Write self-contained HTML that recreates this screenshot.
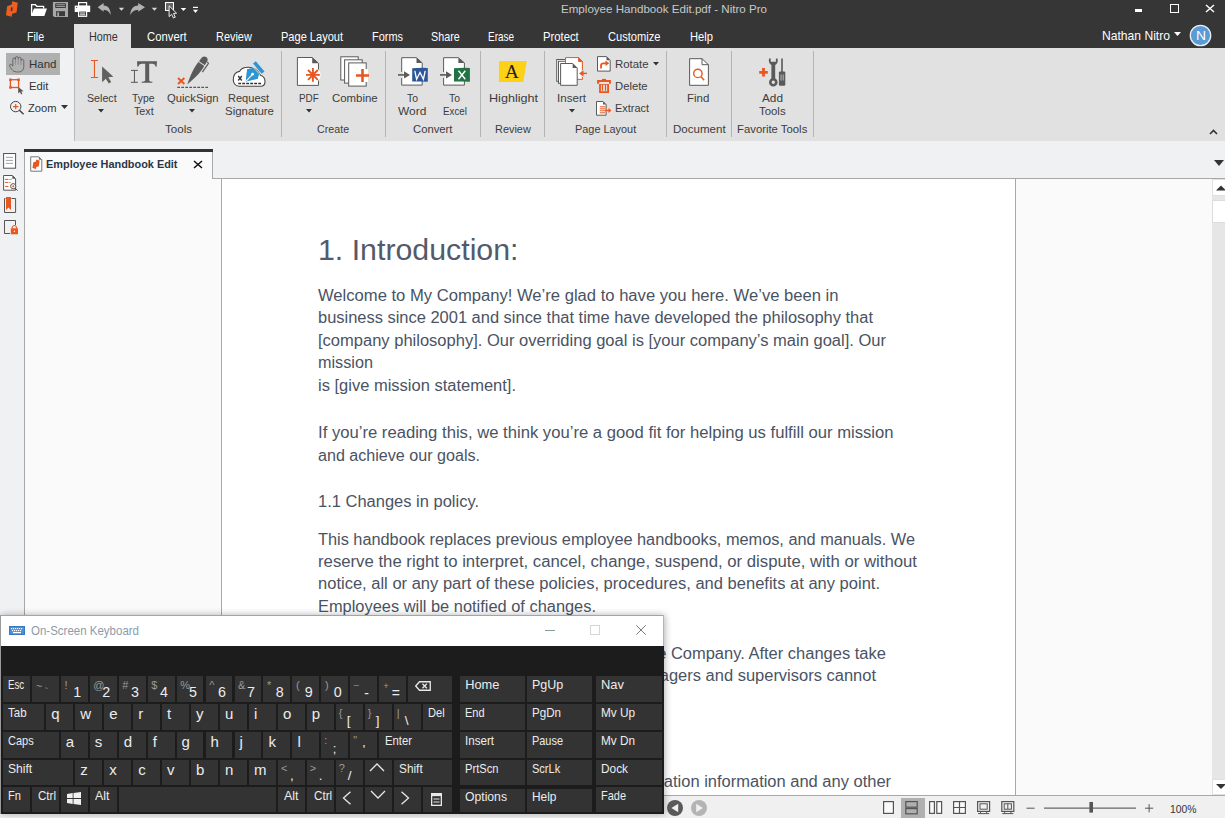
<!DOCTYPE html>
<html><head><meta charset="utf-8"><style>
html,body{margin:0;padding:0;width:1225px;height:818px;overflow:hidden;background:#f0f1f3;position:relative;}
.t{position:absolute;white-space:pre;font-family:"Liberation Sans", sans-serif;transform-origin:0 0;}
.r{position:absolute;display:block;}
</style></head><body>
<div class="r" style="left:0px;top:0px;width:1225px;height:48px;background:#363636;"></div>
<div class="r" style="left:0px;top:48px;width:74px;height:93px;background:#f0f1f3;"></div>
<div class="r" style="left:74px;top:48px;width:1151px;height:93px;background:#e1e1e1;"></div>
<div class="r" style="left:74px;top:48px;width:1px;height:93px;background:#b9b9b9;"></div>
<div class="r" style="left:74px;top:24px;width:57px;height:24px;background:#e1e1e1;"></div>
<div class="r" style="left:0px;top:141px;width:1225px;height:38px;background:#f0f1f3;"></div>
<div class="r" style="left:0px;top:179px;width:25px;height:639px;background:#f0f1f3;"></div>
<div class="r" style="left:24px;top:149px;width:189px;height:3px;background:#333333;"></div>
<div class="r" style="left:24px;top:152px;width:1px;height:27px;background:#a8a8a8;"></div>
<div class="r" style="left:212px;top:152px;width:1px;height:27px;background:#a8a8a8;"></div>
<div class="r" style="left:213px;top:178px;width:1012px;height:1px;background:#a8a8a8;"></div>
<div class="r" style="left:25px;top:152px;width:187px;height:27px;background:#fafafa;"></div>
<div class="r" style="left:24px;top:179px;width:1px;height:639px;background:#a8a8a8;"></div>
<div class="r" style="left:25px;top:179px;width:196px;height:639px;background:#fafafa;"></div>
<div class="r" style="left:221px;top:179px;width:1px;height:617px;background:#a8a8a8;"></div>
<div class="r" style="left:222px;top:179px;width:793px;height:617px;background:#ffffff;"></div>
<div class="r" style="left:1015px;top:179px;width:1px;height:617px;background:#a8a8a8;"></div>
<div class="r" style="left:1016px;top:179px;width:197px;height:617px;background:#fafafa;"></div>
<div class="r" style="left:1212px;top:179px;width:13px;height:616px;background:#e6e6e6;"></div>
<div class="r" style="left:1212px;top:179px;width:20px;height:17px;background:#ffffff;box-sizing:border-box;border:1px solid #e0e0e0;"></div>
<div class="r" style="left:1212px;top:200px;width:20px;height:23px;background:#ffffff;box-sizing:border-box;border:1px solid #dcdcdc;"></div>
<div class="r" style="left:1212px;top:779px;width:20px;height:16px;background:#ffffff;box-sizing:border-box;border:1px solid #e0e0e0;"></div>
<svg class="r" style="left:1212px;top:179px;overflow:hidden" width="13" height="17" viewBox="0 0 13 17"><path d="M4 11.5 L9 6.5 L14 11.5 Z" fill="#333"/></svg>
<svg class="r" style="left:1212px;top:779px;overflow:hidden" width="13" height="16" viewBox="0 0 13 16"><path d="M4 5 L9 10 L14 5 Z" fill="#333"/></svg>
<div class="r" style="left:0px;top:795px;width:1225px;height:1px;background:#a8a8a8;"></div>
<div class="r" style="left:0px;top:796px;width:1225px;height:22px;background:#f0f0f0;"></div>
<span id="t0" class="t fit" style="left:560.60px;top:3.63px;font-size:11.3px;line-height:11.3px;color:#c8c8c8;transform:scaleX(1.0252);">Employee Handbook Edit.pdf - Nitro Pro</span>
<div class="r" style="left:1135px;top:9px;width:7px;height:3px;background:#ffffff;"></div>
<div class="r" style="left:1170px;top:4px;width:9px;height:9px;background:transparent;box-sizing:border-box;border:1.6px solid #fff;"></div>
<svg class="r" style="left:1205px;top:4px;" width="10" height="9" viewBox="0 0 10 9"><path d="M1 1 L9 8 M9 1 L1 8" stroke="#fff" stroke-width="1.4"/></svg>
<span id="t1" class="t fit" style="left:26.50px;top:31.10px;font-size:12.4px;line-height:12.4px;color:#ffffff;transform:scaleX(0.8563);">File</span>
<span id="t2" class="t fit" style="left:147.00px;top:31.10px;font-size:12.4px;line-height:12.4px;color:#ffffff;transform:scaleX(0.9126);">Convert</span>
<span id="t3" class="t fit" style="left:216.00px;top:31.10px;font-size:12.4px;line-height:12.4px;color:#ffffff;transform:scaleX(0.8809);">Review</span>
<span id="t4" class="t fit" style="left:281.00px;top:31.10px;font-size:12.4px;line-height:12.4px;color:#ffffff;transform:scaleX(0.8909);">Page Layout</span>
<span id="t5" class="t fit" style="left:372.00px;top:31.10px;font-size:12.4px;line-height:12.4px;color:#ffffff;transform:scaleX(0.8830);">Forms</span>
<span id="t6" class="t fit" style="left:431.00px;top:31.10px;font-size:12.4px;line-height:12.4px;color:#ffffff;transform:scaleX(0.8676);">Share</span>
<span id="t7" class="t fit" style="left:488.00px;top:31.10px;font-size:12.4px;line-height:12.4px;color:#ffffff;transform:scaleX(0.8031);">Erase</span>
<span id="t8" class="t fit" style="left:543.00px;top:31.10px;font-size:12.4px;line-height:12.4px;color:#ffffff;transform:scaleX(0.9092);">Protect</span>
<span id="t9" class="t fit" style="left:608.00px;top:31.10px;font-size:12.4px;line-height:12.4px;color:#ffffff;transform:scaleX(0.8970);">Customize</span>
<span id="t10" class="t fit" style="left:690.00px;top:31.10px;font-size:12.4px;line-height:12.4px;color:#ffffff;transform:scaleX(0.9025);">Help</span>
<span id="t11" class="t fit" style="left:88.70px;top:31.10px;font-size:12.4px;line-height:12.4px;color:#333333;transform:scaleX(0.8741);">Home</span>
<span id="t12" class="t fit" style="left:1101.60px;top:29.60px;font-size:12.4px;line-height:12.4px;color:#ffffff;transform:scaleX(0.9775);">Nathan Nitro</span>
<svg class="r" style="left:1174px;top:32px;" width="7" height="5" viewBox="0 0 7 5"><path d="M0 0 L7 0 L3.5 4 Z" fill="#fff"/></svg>
<svg class="r" style="left:1189px;top:24px;" width="23" height="23" viewBox="0 0 23 23"><circle cx="11.5" cy="11.5" r="10.2" fill="#5b9bd5" stroke="#e8eef5" stroke-width="1.3"/></svg>
<span id="t13" class="t fit" style="left:1195.50px;top:30.00px;font-size:12.4px;line-height:12.4px;color:#ffffff;transform:scaleX(1.1169);">N</span>
<div class="r" style="left:6px;top:53px;width:54px;height:22px;background:#b0b0b0;"></div>
<span id="t14" class="t fit" style="left:28.50px;top:58.28px;font-size:11.6px;line-height:11.6px;color:#333;transform:scaleX(0.9921);">Hand</span>
<span id="t15" class="t fit" style="left:28.50px;top:79.88px;font-size:11.6px;line-height:11.6px;color:#333;transform:scaleX(0.9758);">Edit</span>
<span id="t16" class="t fit" style="left:28.00px;top:102.18px;font-size:11.6px;line-height:11.6px;color:#333;transform:scaleX(0.9615);">Zoom</span>
<svg class="r" style="left:61px;top:105px;" width="7" height="5" viewBox="0 0 7 5"><path d="M0 0 L7 0 L3.5 4 Z" fill="#333"/></svg>
<div class="r" style="left:281px;top:51px;width:1px;height:86px;background:#b4b4b4;"></div>
<div class="r" style="left:385px;top:51px;width:1px;height:86px;background:#b4b4b4;"></div>
<div class="r" style="left:480px;top:51px;width:1px;height:86px;background:#b4b4b4;"></div>
<div class="r" style="left:544px;top:51px;width:1px;height:86px;background:#b4b4b4;"></div>
<div class="r" style="left:666px;top:51px;width:1px;height:86px;background:#b4b4b4;"></div>
<div class="r" style="left:731px;top:51px;width:1px;height:86px;background:#b4b4b4;"></div>
<div class="r" style="left:813px;top:51px;width:1px;height:86px;background:#b4b4b4;"></div>
<div class="r" style="left:74px;top:141px;width:1151px;height:0px;background:#000;"></div>
<span id="t17" class="t fit" style="left:87.40px;top:93.02px;font-size:11.2px;line-height:11.2px;color:#3c3c3c;transform:scaleX(0.9520);">Select</span>
<span id="t18" class="t fit" style="left:132.00px;top:93.02px;font-size:11.2px;line-height:11.2px;color:#3c3c3c;transform:scaleX(0.9314);">Type</span>
<span id="t19" class="t fit" style="left:133.95px;top:106.02px;font-size:11.2px;line-height:11.2px;color:#3c3c3c;transform:scaleX(0.9595);">Text</span>
<span id="t20" class="t fit" style="left:167.45px;top:93.02px;font-size:11.2px;line-height:11.2px;color:#3c3c3c;transform:scaleX(1.0098);">QuickSign</span>
<span id="t21" class="t fit" style="left:228.45px;top:93.02px;font-size:11.2px;line-height:11.2px;color:#3c3c3c;transform:scaleX(0.9863);">Request</span>
<span id="t22" class="t fit" style="left:225.00px;top:106.02px;font-size:11.2px;line-height:11.2px;color:#3c3c3c;transform:scaleX(1.0228);">Signature</span>
<span id="t23" class="t fit" style="left:164.95px;top:124.02px;font-size:11.2px;line-height:11.2px;color:#3c3c3c;transform:scaleX(1.0373);">Tools</span>
<span id="t24" class="t fit" style="left:299.20px;top:93.02px;font-size:11.2px;line-height:11.2px;color:#3c3c3c;transform:scaleX(0.8849);">PDF</span>
<span id="t25" class="t fit" style="left:331.95px;top:93.02px;font-size:11.2px;line-height:11.2px;color:#3c3c3c;transform:scaleX(1.0205);">Combine</span>
<span id="t26" class="t fit" style="left:317.35px;top:124.02px;font-size:11.2px;line-height:11.2px;color:#3c3c3c;transform:scaleX(0.9555);">Create</span>
<span id="t27" class="t fit" style="left:407.00px;top:93.02px;font-size:11.2px;line-height:11.2px;color:#3c3c3c;transform:scaleX(0.9300);">To</span>
<span id="t28" class="t fit" style="left:398.25px;top:106.02px;font-size:11.2px;line-height:11.2px;color:#3c3c3c;transform:scaleX(1.0667);">Word</span>
<span id="t29" class="t fit" style="left:449.00px;top:93.02px;font-size:11.2px;line-height:11.2px;color:#3c3c3c;transform:scaleX(0.9300);">To</span>
<span id="t30" class="t fit" style="left:442.60px;top:106.02px;font-size:11.2px;line-height:11.2px;color:#3c3c3c;transform:scaleX(0.8772);">Excel</span>
<span id="t31" class="t fit" style="left:413.35px;top:124.02px;font-size:11.2px;line-height:11.2px;color:#3c3c3c;transform:scaleX(1.0080);">Convert</span>
<span id="t32" class="t fit" style="left:489.00px;top:93.02px;font-size:11.2px;line-height:11.2px;color:#3c3c3c;transform:scaleX(1.1252);">Highlight</span>
<span id="t33" class="t fit" style="left:495.00px;top:124.02px;font-size:11.2px;line-height:11.2px;color:#3c3c3c;transform:scaleX(0.9758);">Review</span>
<span id="t34" class="t fit" style="left:557.00px;top:93.02px;font-size:11.2px;line-height:11.2px;color:#3c3c3c;transform:scaleX(1.0363);">Insert</span>
<span id="t35" class="t fit" style="left:575.40px;top:124.02px;font-size:11.2px;line-height:11.2px;color:#3c3c3c;transform:scaleX(0.9741);">Page Layout</span>
<span id="t36" class="t fit" style="left:615.00px;top:59.22px;font-size:11.2px;line-height:11.2px;color:#3c3c3c;transform:scaleX(1.0191);">Rotate</span>
<span id="t37" class="t fit" style="left:615.20px;top:81.02px;font-size:11.2px;line-height:11.2px;color:#3c3c3c;transform:scaleX(1.0079);">Delete</span>
<span id="t38" class="t fit" style="left:615.00px;top:103.02px;font-size:11.2px;line-height:11.2px;color:#3c3c3c;transform:scaleX(0.9762);">Extract</span>
<span id="t39" class="t fit" style="left:687.35px;top:93.02px;font-size:11.2px;line-height:11.2px;color:#3c3c3c;transform:scaleX(1.0246);">Find</span>
<span id="t40" class="t fit" style="left:673.40px;top:124.02px;font-size:11.2px;line-height:11.2px;color:#3c3c3c;transform:scaleX(1.0314);">Document</span>
<span id="t41" class="t fit" style="left:762.00px;top:93.02px;font-size:11.2px;line-height:11.2px;color:#3c3c3c;transform:scaleX(1.0549);">Add</span>
<span id="t42" class="t fit" style="left:759.00px;top:106.02px;font-size:11.2px;line-height:11.2px;color:#3c3c3c;transform:scaleX(1.0182);">Tools</span>
<span id="t43" class="t fit" style="left:737.15px;top:124.02px;font-size:11.2px;line-height:11.2px;color:#3c3c3c;transform:scaleX(1.0124);">Favorite Tools</span>
<svg class="r" style="left:98.4px;top:108.6px;" width="6" height="4" viewBox="0 0 6 4"><path d="M0 0 L6 0 L3 3.5 Z" fill="#333"/></svg>
<svg class="r" style="left:189.3px;top:108.6px;" width="6" height="4" viewBox="0 0 6 4"><path d="M0 0 L6 0 L3 3.5 Z" fill="#333"/></svg>
<svg class="r" style="left:305.5px;top:108.6px;" width="6" height="4" viewBox="0 0 6 4"><path d="M0 0 L6 0 L3 3.5 Z" fill="#333"/></svg>
<svg class="r" style="left:568.5px;top:108.6px;" width="6" height="4" viewBox="0 0 6 4"><path d="M0 0 L6 0 L3 3.5 Z" fill="#333"/></svg>
<svg class="r" style="left:653px;top:62px;" width="6" height="4" viewBox="0 0 6 4"><path d="M0 0 L6 0 L3 3.5 Z" fill="#333"/></svg>
<svg class="r" style="left:1209px;top:129px;" width="9" height="6" viewBox="0 0 9 6"><path d="M1 5 L4.5 1.5 L8 5" stroke="#333" stroke-width="1.6" fill="none"/></svg>
<svg class="r" style="left:1213.5px;top:160.3px;" width="10" height="6" viewBox="0 0 10 6"><path d="M0 0 L10 0 L5 6 Z" fill="#333"/></svg>
<span id="t44" class="t fit" style="left:46.40px;top:158.65px;font-size:11.4px;line-height:11.4px;color:#2b3645;font-weight:700;transform:scaleX(0.9575);">Employee Handbook Edit</span>
<svg class="r" style="left:193px;top:160px;" width="10" height="9" viewBox="0 0 10 9"><path d="M1 1 L9 8 M9 1 L1 8" stroke="#111" stroke-width="1.5"/></svg>
<span id="t45" class="t fit" style="left:318.00px;top:235.55px;font-size:29px;line-height:29px;color:#535a69;transform:scaleX(1.0451);">1. Introduction:</span>
<span id="t46" class="t fit" style="left:317.90px;top:287.56px;font-size:16px;line-height:16px;color:#4a5363;transform:scaleX(1.0377);">Welcome to My Company! We’re glad to have you here. We’ve been in</span>
<span id="t47" class="t fit" style="left:317.90px;top:310.36px;font-size:16px;line-height:16px;color:#4a5363;transform:scaleX(1.0279);">business since 2001 and since that time have developed the philosophy that</span>
<span id="t48" class="t fit" style="left:317.90px;top:332.96px;font-size:16px;line-height:16px;color:#4a5363;transform:scaleX(1.0323);">[company philosophy]. Our overriding goal is [your company’s main goal]. Our</span>
<span id="t49" class="t fit" style="left:317.90px;top:355.46px;font-size:16px;line-height:16px;color:#4a5363;transform:scaleX(1.0141);">mission</span>
<span id="t50" class="t fit" style="left:317.90px;top:378.36px;font-size:16px;line-height:16px;color:#4a5363;transform:scaleX(1.0308);">is [give mission statement].</span>
<span id="t51" class="t fit" style="left:317.90px;top:425.26px;font-size:16px;line-height:16px;color:#4a5363;transform:scaleX(1.0405);">If you’re reading this, we think you’re a good fit for helping us fulfill our mission</span>
<span id="t52" class="t fit" style="left:317.90px;top:447.56px;font-size:16px;line-height:16px;color:#4a5363;transform:scaleX(1.0062);">and achieve our goals.</span>
<span id="t53" class="t fit" style="left:317.90px;top:493.76px;font-size:16px;line-height:16px;color:#4a5363;transform:scaleX(1.0304);">1.1 Changes in policy.</span>
<span id="t54" class="t fit" style="left:317.90px;top:531.66px;font-size:16px;line-height:16px;color:#4a5363;transform:scaleX(1.0191);">This handbook replaces previous employee handbooks, memos, and manuals. We</span>
<span id="t55" class="t fit" style="left:317.90px;top:553.86px;font-size:16px;line-height:16px;color:#4a5363;transform:scaleX(1.0458);">reserve the right to interpret, cancel, change, suspend, or dispute, with or without</span>
<span id="t56" class="t fit" style="left:317.90px;top:576.46px;font-size:16px;line-height:16px;color:#4a5363;transform:scaleX(1.0325);">notice, all or any part of these policies, procedures, and benefits at any point.</span>
<span id="t57" class="t fit" style="left:317.90px;top:599.16px;font-size:16px;line-height:16px;color:#4a5363;transform:scaleX(1.0248);">Employees will be notified of changes.</span>
<span id="t58" class="t fit" style="left:280.15px;top:645.76px;font-size:16px;line-height:16px;color:#4a5363;transform:scaleX(1.0300);">Changes will be effective on dates determined by the Company. After changes take</span>
<span id="t59" class="t fit" style="left:279.03px;top:668.26px;font-size:16px;line-height:16px;color:#4a5363;transform:scaleX(1.0300);">effect, no oral statements or representations by managers and supervisors cannot</span>
<span id="t60" class="t fit" style="left:214.93px;top:774.36px;font-size:16px;line-height:16px;color:#4a5363;transform:scaleX(1.0300);">Please consult your manager for more details about compensation information and any other</span>
<div class="r" style="left:0px;top:615px;width:664px;height:199px;background:#1c1c1c;box-shadow:1px 0px 7px rgba(0,0,0,0.3);"></div>
<div class="r" style="left:0px;top:615px;width:664px;height:31px;background:#ffffff;box-sizing:border-box;border-top:1px solid #a4a4a4;"></div>
<div class="r" style="left:0px;top:615px;width:1px;height:199px;background:#9a9a9a;"></div>
<span id="t61" class="t fit" style="left:30.60px;top:624.90px;font-size:12.4px;line-height:12.4px;color:#8d9ba8;transform:scaleX(0.9278);">On-Screen Keyboard</span>
<svg class="r" style="left:9px;top:626px;" width="16" height="9" viewBox="0 0 16 9"><rect x="0.5" y="0.5" width="15" height="8" fill="#4a8fd8" stroke="#3b78c0" stroke-width="1"/><rect x="2" y="2" width="1.2" height="1.2" fill="#fff"/><rect x="4" y="2" width="1.2" height="1.2" fill="#fff"/><rect x="6" y="2" width="1.2" height="1.2" fill="#fff"/><rect x="8" y="2" width="1.2" height="1.2" fill="#fff"/><rect x="10" y="2" width="1.2" height="1.2" fill="#fff"/><rect x="12" y="2" width="1.2" height="1.2" fill="#fff"/><rect x="3" y="4" width="1.2" height="1.2" fill="#fff"/><rect x="5" y="4" width="1.2" height="1.2" fill="#fff"/><rect x="7" y="4" width="1.2" height="1.2" fill="#fff"/><rect x="9" y="4" width="1.2" height="1.2" fill="#fff"/><rect x="11" y="4" width="1.2" height="1.2" fill="#fff"/><rect x="4" y="6" width="8" height="1.2" fill="#fff"/></svg>
<div class="r" style="left:545px;top:630px;width:10px;height:1px;background:#86a090;"></div>
<div class="r" style="left:590px;top:625px;width:10px;height:10px;background:transparent;box-sizing:border-box;border:1px solid #d6d6d6;"></div>
<svg class="r" style="left:636px;top:625px;" width="10" height="10" viewBox="0 0 10 10"><path d="M0.3 0.3 L9.7 9.7 M9.7 0.3 L0.3 9.7" stroke="#7a7a7a" stroke-width="1"/></svg>
<div class="r" style="left:663px;top:615px;width:1px;height:31px;background:#b4b4b4;"></div>
<div class="r" style="left:2.9px;top:676px;width:26.9px;height:26px;background:#333333;"></div>
<span id="t62" class="t fit" style="left:8.40px;top:678.66px;font-size:12.8px;line-height:12.8px;color:#ececec;transform:scaleX(0.7590);">Esc</span>
<div class="r" style="left:31.8px;top:676px;width:26.9px;height:26px;background:#333333;"></div>
<span id="t63" class="t fit" style="left:35.85px;top:681.19px;font-size:11px;line-height:11px;color:#9a9a9a;">~</span>
<span id="t64" class="t fit" style="left:44.85px;top:686.69px;font-size:11px;line-height:11px;color:#9a9a9a;">`</span>
<div class="r" style="left:60.8px;top:676px;width:26.9px;height:26px;background:#333333;"></div>
<span id="t65" class="t fit" style="left:64.40px;top:679.69px;font-size:11px;line-height:11px;color:#9a9a9a;">!</span>
<span id="t66" class="t fit" style="left:73.20px;top:685.40px;font-size:14.3px;line-height:14.3px;color:#ececec;">1</span>
<div class="r" style="left:89.8px;top:676px;width:26.9px;height:26px;background:#333333;"></div>
<span id="t67" class="t fit" style="left:93.35px;top:679.69px;font-size:11px;line-height:11px;color:#9a9a9a;">@</span>
<span id="t68" class="t fit" style="left:102.15px;top:685.40px;font-size:14.3px;line-height:14.3px;color:#ececec;">2</span>
<div class="r" style="left:118.7px;top:676px;width:26.9px;height:26px;background:#333333;"></div>
<span id="t69" class="t fit" style="left:122.30px;top:679.69px;font-size:11px;line-height:11px;color:#9a9a9a;">#</span>
<span id="t70" class="t fit" style="left:131.10px;top:685.40px;font-size:14.3px;line-height:14.3px;color:#ececec;">3</span>
<div class="r" style="left:147.7px;top:676px;width:26.9px;height:26px;background:#333333;"></div>
<span id="t71" class="t fit" style="left:151.25px;top:679.69px;font-size:11px;line-height:11px;color:#9a9a9a;">$</span>
<span id="t72" class="t fit" style="left:160.05px;top:685.40px;font-size:14.3px;line-height:14.3px;color:#ececec;">4</span>
<div class="r" style="left:176.6px;top:676px;width:26.9px;height:26px;background:#333333;"></div>
<span id="t73" class="t fit" style="left:180.20px;top:679.69px;font-size:11px;line-height:11px;color:#9a9a9a;">%</span>
<span id="t74" class="t fit" style="left:189.00px;top:685.40px;font-size:14.3px;line-height:14.3px;color:#ececec;">5</span>
<div class="r" style="left:205.6px;top:676px;width:26.9px;height:26px;background:#333333;"></div>
<span id="t75" class="t fit" style="left:209.15px;top:679.69px;font-size:11px;line-height:11px;color:#9a9a9a;">^</span>
<span id="t76" class="t fit" style="left:217.95px;top:685.40px;font-size:14.3px;line-height:14.3px;color:#ececec;">6</span>
<div class="r" style="left:234.5px;top:676px;width:26.9px;height:26px;background:#333333;"></div>
<span id="t77" class="t fit" style="left:238.10px;top:679.69px;font-size:11px;line-height:11px;color:#9a9a9a;">&amp;</span>
<span id="t78" class="t fit" style="left:246.90px;top:685.40px;font-size:14.3px;line-height:14.3px;color:#ececec;">7</span>
<div class="r" style="left:263.4px;top:676px;width:26.9px;height:26px;background:#333333;"></div>
<span id="t79" class="t fit" style="left:267.05px;top:679.69px;font-size:11px;line-height:11px;color:#9a9a9a;">*</span>
<span id="t80" class="t fit" style="left:275.85px;top:685.40px;font-size:14.3px;line-height:14.3px;color:#ececec;">8</span>
<div class="r" style="left:292.4px;top:676px;width:26.9px;height:26px;background:#333333;"></div>
<span id="t81" class="t fit" style="left:296.00px;top:679.69px;font-size:11px;line-height:11px;color:#9a9a9a;">(</span>
<span id="t82" class="t fit" style="left:304.80px;top:685.40px;font-size:14.3px;line-height:14.3px;color:#ececec;">9</span>
<div class="r" style="left:321.3px;top:676px;width:26.9px;height:26px;background:#333333;"></div>
<span id="t83" class="t fit" style="left:324.95px;top:679.69px;font-size:11px;line-height:11px;color:#9a9a9a;">)</span>
<span id="t84" class="t fit" style="left:333.75px;top:685.40px;font-size:14.3px;line-height:14.3px;color:#ececec;">0</span>
<div class="r" style="left:350.3px;top:676px;width:26.9px;height:26px;background:#333333;"></div>
<span id="t85" class="t fit" style="left:353.80px;top:681.38px;font-size:9px;line-height:9px;color:#9a9a9a;">–</span>
<span id="t86" class="t fit" style="left:364.30px;top:685.65px;font-size:14px;line-height:14px;color:#ececec;">-</span>
<div class="r" style="left:379.2px;top:676px;width:26.9px;height:26px;background:#333333;"></div>
<span id="t87" class="t fit" style="left:383.25px;top:680.96px;font-size:9.5px;line-height:9.5px;color:#9a9a9a;">+</span>
<span id="t88" class="t fit" style="left:391.75px;top:685.65px;font-size:14px;line-height:14px;color:#ececec;">=</span>
<div class="r" style="left:408.2px;top:676px;width:43.4px;height:26px;background:#333333;"></div>
<svg class="r" style="left:415px;top:681px;" width="16" height="10" viewBox="0 0 16 10"><path d="M4.5 0.75 L15.25 0.75 L15.25 9.25 L4.5 9.25 L0.7 5 Z" fill="none" stroke="#e8e8e8" stroke-width="1.3"/><path d="M7.5 2.8 L11.8 7.2 M11.8 2.8 L7.5 7.2" stroke="#e8e8e8" stroke-width="1.3"/></svg>
<div class="r" style="left:2.9px;top:704px;width:41.4px;height:26px;background:#333333;"></div>
<span id="t89" class="t fit" style="left:8.20px;top:706.66px;font-size:12.8px;line-height:12.8px;color:#ececec;transform:scaleX(0.9011);">Tab</span>
<div class="r" style="left:46.3px;top:704px;width:26.9px;height:26px;background:#333333;"></div>
<span id="t90" class="t fit" style="left:51.32px;top:706.00px;font-size:15px;line-height:15px;color:#ececec;">q</span>
<div class="r" style="left:75.3px;top:704px;width:26.9px;height:26px;background:#333333;"></div>
<span id="t91" class="t fit" style="left:80.28px;top:706.00px;font-size:15px;line-height:15px;color:#ececec;">w</span>
<div class="r" style="left:104.2px;top:704px;width:26.9px;height:26px;background:#333333;"></div>
<span id="t92" class="t fit" style="left:109.23px;top:706.00px;font-size:15px;line-height:15px;color:#ececec;">e</span>
<div class="r" style="left:133.2px;top:704px;width:26.9px;height:26px;background:#333333;"></div>
<span id="t93" class="t fit" style="left:138.18px;top:706.00px;font-size:15px;line-height:15px;color:#ececec;">r</span>
<div class="r" style="left:162.1px;top:704px;width:26.9px;height:26px;background:#333333;"></div>
<span id="t94" class="t fit" style="left:167.12px;top:706.00px;font-size:15px;line-height:15px;color:#ececec;">t</span>
<div class="r" style="left:191.1px;top:704px;width:26.9px;height:26px;background:#333333;"></div>
<span id="t95" class="t fit" style="left:196.07px;top:706.00px;font-size:15px;line-height:15px;color:#ececec;">y</span>
<div class="r" style="left:220.0px;top:704px;width:26.9px;height:26px;background:#333333;"></div>
<span id="t96" class="t fit" style="left:225.03px;top:706.00px;font-size:15px;line-height:15px;color:#ececec;">u</span>
<div class="r" style="left:249.0px;top:704px;width:26.9px;height:26px;background:#333333;"></div>
<span id="t97" class="t fit" style="left:253.97px;top:706.00px;font-size:15px;line-height:15px;color:#ececec;">i</span>
<div class="r" style="left:277.9px;top:704px;width:26.9px;height:26px;background:#333333;"></div>
<span id="t98" class="t fit" style="left:282.92px;top:706.00px;font-size:15px;line-height:15px;color:#ececec;">o</span>
<div class="r" style="left:306.9px;top:704px;width:26.9px;height:26px;background:#333333;"></div>
<span id="t99" class="t fit" style="left:311.87px;top:706.00px;font-size:15px;line-height:15px;color:#ececec;">p</span>
<div class="r" style="left:335.8px;top:704px;width:26.9px;height:26px;background:#333333;"></div>
<span id="t100" class="t fit" style="left:338.82px;top:707.69px;font-size:11px;line-height:11px;color:#9a9a9a;">{</span>
<span id="t101" class="t fit" style="left:346.82px;top:714.07px;font-size:13.5px;line-height:13.5px;color:#ececec;">[</span>
<div class="r" style="left:364.8px;top:704px;width:26.9px;height:26px;background:#333333;"></div>
<span id="t102" class="t fit" style="left:367.77px;top:707.69px;font-size:11px;line-height:11px;color:#9a9a9a;">}</span>
<span id="t103" class="t fit" style="left:375.77px;top:714.07px;font-size:13.5px;line-height:13.5px;color:#ececec;">]</span>
<div class="r" style="left:393.7px;top:704px;width:26.9px;height:26px;background:#333333;"></div>
<span id="t104" class="t fit" style="left:396.72px;top:707.69px;font-size:11px;line-height:11px;color:#9a9a9a;">|</span>
<span id="t105" class="t fit" style="left:404.72px;top:714.07px;font-size:13.5px;line-height:13.5px;color:#ececec;">\</span>
<div class="r" style="left:422.7px;top:704px;width:28.9px;height:26px;background:#333333;"></div>
<span id="t106" class="t fit" style="left:428.30px;top:706.66px;font-size:12.8px;line-height:12.8px;color:#ececec;transform:scaleX(0.8697);">Del</span>
<div class="r" style="left:2.9px;top:732px;width:55.9px;height:26px;background:#333333;"></div>
<span id="t107" class="t fit" style="left:8.30px;top:734.66px;font-size:12.8px;line-height:12.8px;color:#ececec;transform:scaleX(0.8603);">Caps</span>
<div class="r" style="left:60.8px;top:732px;width:26.9px;height:26px;background:#333333;"></div>
<span id="t108" class="t fit" style="left:65.80px;top:734.00px;font-size:15px;line-height:15px;color:#ececec;">a</span>
<div class="r" style="left:89.8px;top:732px;width:26.9px;height:26px;background:#333333;"></div>
<span id="t109" class="t fit" style="left:94.75px;top:734.00px;font-size:15px;line-height:15px;color:#ececec;">s</span>
<div class="r" style="left:118.7px;top:732px;width:26.9px;height:26px;background:#333333;"></div>
<span id="t110" class="t fit" style="left:123.70px;top:734.00px;font-size:15px;line-height:15px;color:#ececec;">d</span>
<div class="r" style="left:147.7px;top:732px;width:26.9px;height:26px;background:#333333;"></div>
<span id="t111" class="t fit" style="left:152.65px;top:734.00px;font-size:15px;line-height:15px;color:#ececec;">f</span>
<div class="r" style="left:176.6px;top:732px;width:26.9px;height:26px;background:#333333;"></div>
<span id="t112" class="t fit" style="left:181.60px;top:734.00px;font-size:15px;line-height:15px;color:#ececec;">g</span>
<div class="r" style="left:205.6px;top:732px;width:26.9px;height:26px;background:#333333;"></div>
<span id="t113" class="t fit" style="left:210.55px;top:734.00px;font-size:15px;line-height:15px;color:#ececec;">h</span>
<div class="r" style="left:234.5px;top:732px;width:26.9px;height:26px;background:#333333;"></div>
<span id="t114" class="t fit" style="left:239.50px;top:734.00px;font-size:15px;line-height:15px;color:#ececec;">j</span>
<div class="r" style="left:263.4px;top:732px;width:26.9px;height:26px;background:#333333;"></div>
<span id="t115" class="t fit" style="left:268.45px;top:734.00px;font-size:15px;line-height:15px;color:#ececec;">k</span>
<div class="r" style="left:292.4px;top:732px;width:26.9px;height:26px;background:#333333;"></div>
<span id="t116" class="t fit" style="left:297.40px;top:734.00px;font-size:15px;line-height:15px;color:#ececec;">l</span>
<div class="r" style="left:321.3px;top:732px;width:26.9px;height:26px;background:#333333;"></div>
<span id="t117" class="t fit" style="left:324.35px;top:735.19px;font-size:11px;line-height:11px;color:#9a9a9a;">:</span>
<span id="t118" class="t fit" style="left:332.85px;top:741.50px;font-size:13px;line-height:13px;color:#ececec;">;</span>
<div class="r" style="left:350.3px;top:732px;width:26.9px;height:26px;background:#333333;"></div>
<span id="t119" class="t fit" style="left:353.30px;top:735.19px;font-size:11px;line-height:11px;color:#9a9a9a;">"</span>
<span id="t120" class="t fit" style="left:362.80px;top:742.50px;font-size:13px;line-height:13px;color:#ececec;">'</span>
<div class="r" style="left:379.2px;top:732px;width:72.4px;height:26px;background:#333333;"></div>
<span id="t121" class="t fit" style="left:385.00px;top:734.66px;font-size:12.8px;line-height:12.8px;color:#ececec;transform:scaleX(0.8825);">Enter</span>
<div class="r" style="left:2.9px;top:760px;width:70.4px;height:25px;background:#333333;"></div>
<span id="t122" class="t fit" style="left:8.20px;top:762.66px;font-size:12.8px;line-height:12.8px;color:#ececec;transform:scaleX(0.9450);">Shift</span>
<div class="r" style="left:75.3px;top:760px;width:26.9px;height:25px;background:#333333;"></div>
<span id="t123" class="t fit" style="left:80.28px;top:762.00px;font-size:15px;line-height:15px;color:#ececec;">z</span>
<div class="r" style="left:104.2px;top:760px;width:26.9px;height:25px;background:#333333;"></div>
<span id="t124" class="t fit" style="left:109.23px;top:762.00px;font-size:15px;line-height:15px;color:#ececec;">x</span>
<div class="r" style="left:133.2px;top:760px;width:26.9px;height:25px;background:#333333;"></div>
<span id="t125" class="t fit" style="left:138.18px;top:762.00px;font-size:15px;line-height:15px;color:#ececec;">c</span>
<div class="r" style="left:162.1px;top:760px;width:26.9px;height:25px;background:#333333;"></div>
<span id="t126" class="t fit" style="left:167.12px;top:762.00px;font-size:15px;line-height:15px;color:#ececec;">v</span>
<div class="r" style="left:191.1px;top:760px;width:26.9px;height:25px;background:#333333;"></div>
<span id="t127" class="t fit" style="left:196.07px;top:762.00px;font-size:15px;line-height:15px;color:#ececec;">b</span>
<div class="r" style="left:220.0px;top:760px;width:26.9px;height:25px;background:#333333;"></div>
<span id="t128" class="t fit" style="left:225.03px;top:762.00px;font-size:15px;line-height:15px;color:#ececec;">n</span>
<div class="r" style="left:249.0px;top:760px;width:26.9px;height:25px;background:#333333;"></div>
<span id="t129" class="t fit" style="left:253.97px;top:762.00px;font-size:15px;line-height:15px;color:#ececec;">m</span>
<div class="r" style="left:277.9px;top:760px;width:26.9px;height:25px;background:#333333;"></div>
<span id="t130" class="t fit" style="left:280.92px;top:763.19px;font-size:11px;line-height:11px;color:#9a9a9a;">&lt;</span>
<span id="t131" class="t fit" style="left:289.92px;top:769.07px;font-size:13.5px;line-height:13.5px;color:#ececec;">,</span>
<div class="r" style="left:306.9px;top:760px;width:26.9px;height:25px;background:#333333;"></div>
<span id="t132" class="t fit" style="left:309.87px;top:763.19px;font-size:11px;line-height:11px;color:#9a9a9a;">&gt;</span>
<span id="t133" class="t fit" style="left:318.87px;top:769.07px;font-size:13.5px;line-height:13.5px;color:#ececec;">.</span>
<div class="r" style="left:335.8px;top:760px;width:26.9px;height:25px;background:#333333;"></div>
<span id="t134" class="t fit" style="left:338.82px;top:763.19px;font-size:11px;line-height:11px;color:#9a9a9a;">?</span>
<span id="t135" class="t fit" style="left:347.82px;top:769.07px;font-size:13.5px;line-height:13.5px;color:#ececec;">/</span>
<div class="r" style="left:364.8px;top:760px;width:26.9px;height:25px;background:#333333;"></div>
<svg class="r" style="left:368.775px;top:762px;" width="16" height="10" viewBox="0 0 16 10"><path d="M1 9 L8 2 L15 9" fill="none" stroke="#e8e8e8" stroke-width="1.3"/></svg>
<div class="r" style="left:393.7px;top:760px;width:57.9px;height:25px;background:#333333;"></div>
<span id="t136" class="t fit" style="left:398.60px;top:762.66px;font-size:12.8px;line-height:12.8px;color:#ececec;transform:scaleX(0.9254);">Shift</span>
<div class="r" style="left:2.9px;top:787px;width:26.9px;height:25px;background:#333333;"></div>
<span id="t137" class="t fit" style="left:7.80px;top:789.66px;font-size:12.8px;line-height:12.8px;color:#ececec;transform:scaleX(0.8703);">Fn</span>
<div class="r" style="left:31.8px;top:787px;width:26.9px;height:25px;background:#333333;"></div>
<span id="t138" class="t fit" style="left:37.50px;top:789.66px;font-size:12.8px;line-height:12.8px;color:#ececec;transform:scaleX(0.9042);">Ctrl</span>
<div class="r" style="left:60.8px;top:787px;width:26.9px;height:25px;background:#333333;"></div>
<svg class="r" style="left:66.5px;top:791.5px;" width="14" height="13" viewBox="0 0 14 13"><path d="M0 1.9 L5.7 1.1 L5.7 6.1 L0 6.1 Z M6.5 1 L14 0 L14 6.1 L6.5 6.1 Z M0 6.9 L5.7 6.9 L5.7 11.9 L0 11.1 Z M6.5 6.9 L14 6.9 L14 13 L6.5 12 Z" fill="#f0f0f0"/></svg>
<div class="r" style="left:89.8px;top:787px;width:26.9px;height:25px;background:#333333;"></div>
<span id="t139" class="t fit" style="left:95.20px;top:789.66px;font-size:12.8px;line-height:12.8px;color:#ececec;transform:scaleX(0.9640);">Alt</span>
<div class="r" style="left:118.7px;top:787px;width:157.2px;height:25px;background:#333333;"></div>
<div class="r" style="left:277.9px;top:787px;width:26.9px;height:25px;background:#333333;"></div>
<span id="t140" class="t fit" style="left:284.00px;top:789.66px;font-size:12.8px;line-height:12.8px;color:#ececec;transform:scaleX(0.9774);">Alt</span>
<div class="r" style="left:306.9px;top:787px;width:26.9px;height:25px;background:#333333;"></div>
<span id="t141" class="t fit" style="left:313.60px;top:789.66px;font-size:12.8px;line-height:12.8px;color:#ececec;transform:scaleX(0.9093);">Ctrl</span>
<div class="r" style="left:335.8px;top:787px;width:26.9px;height:25px;background:#333333;"></div>
<svg class="r" style="left:342px;top:791px;" width="10" height="14" viewBox="0 0 10 14"><path d="M8.5 0.8 L1.5 7 L8.5 13.2" fill="none" stroke="#e8e8e8" stroke-width="1.3"/></svg>
<div class="r" style="left:364.8px;top:787px;width:26.9px;height:25px;background:#333333;"></div>
<svg class="r" style="left:369.5px;top:789.5px;" width="16" height="10" viewBox="0 0 16 10"><path d="M1 1 L8 8 L15 1" fill="none" stroke="#e8e8e8" stroke-width="1.3"/></svg>
<div class="r" style="left:393.7px;top:787px;width:26.9px;height:25px;background:#333333;"></div>
<svg class="r" style="left:400px;top:791px;" width="10" height="14" viewBox="0 0 10 14"><path d="M1.5 0.8 L8.5 7 L1.5 13.2" fill="none" stroke="#e8e8e8" stroke-width="1.3"/></svg>
<div class="r" style="left:422.7px;top:787px;width:28.9px;height:25px;background:#333333;"></div>
<svg class="r" style="left:431px;top:792.5px;" width="11" height="13" viewBox="0 0 11 13"><rect x="0.65" y="0.65" width="9.7" height="11.7" fill="none" stroke="#e8e8e8" stroke-width="1.3"/><rect x="0.65" y="0.65" width="9.7" height="2.5" fill="#e8e8e8"/><path d="M2.5 6 H8.5 M2.5 9 H8.5" stroke="#e8e8e8" stroke-width="1.2"/></svg>
<div class="r" style="left:460px;top:676px;width:65px;height:26px;background:#333333;"></div>
<span id="t142" class="t fit" style="left:465.20px;top:678.66px;font-size:12.8px;line-height:12.8px;color:#ececec;">Home</span>
<div class="r" style="left:527px;top:676px;width:65px;height:26px;background:#333333;"></div>
<span id="t143" class="t fit" style="left:532.20px;top:678.66px;font-size:12.8px;line-height:12.8px;color:#ececec;transform:scaleX(0.9776);">PgUp</span>
<div class="r" style="left:596px;top:676px;width:66px;height:26px;background:#333333;"></div>
<span id="t144" class="t fit" style="left:601.20px;top:678.66px;font-size:12.8px;line-height:12.8px;color:#ececec;transform:scaleX(1.0103);">Nav</span>
<div class="r" style="left:460px;top:704px;width:65px;height:26px;background:#333333;"></div>
<span id="t145" class="t fit" style="left:465.20px;top:706.66px;font-size:12.8px;line-height:12.8px;color:#ececec;transform:scaleX(0.8604);">End</span>
<div class="r" style="left:527px;top:704px;width:65px;height:26px;background:#333333;"></div>
<span id="t146" class="t fit" style="left:532.20px;top:706.66px;font-size:12.8px;line-height:12.8px;color:#ececec;transform:scaleX(0.9058);">PgDn</span>
<div class="r" style="left:596px;top:704px;width:66px;height:26px;background:#333333;"></div>
<span id="t147" class="t fit" style="left:601.20px;top:706.66px;font-size:12.8px;line-height:12.8px;color:#ececec;transform:scaleX(0.9247);">Mv Up</span>
<div class="r" style="left:460px;top:732px;width:65px;height:26px;background:#333333;"></div>
<span id="t148" class="t fit" style="left:465.20px;top:734.66px;font-size:12.8px;line-height:12.8px;color:#ececec;transform:scaleX(0.9058);">Insert</span>
<div class="r" style="left:527px;top:732px;width:65px;height:26px;background:#333333;"></div>
<span id="t149" class="t fit" style="left:532.20px;top:734.66px;font-size:12.8px;line-height:12.8px;color:#ececec;transform:scaleX(0.8541);">Pause</span>
<div class="r" style="left:596px;top:732px;width:66px;height:26px;background:#333333;"></div>
<span id="t150" class="t fit" style="left:601.20px;top:734.66px;font-size:12.8px;line-height:12.8px;color:#ececec;transform:scaleX(0.9193);">Mv Dn</span>
<div class="r" style="left:460px;top:760px;width:65px;height:25px;background:#333333;"></div>
<span id="t151" class="t fit" style="left:465.20px;top:762.66px;font-size:12.8px;line-height:12.8px;color:#ececec;transform:scaleX(0.8723);">PrtScn</span>
<div class="r" style="left:527px;top:760px;width:65px;height:25px;background:#333333;"></div>
<span id="t152" class="t fit" style="left:532.20px;top:762.66px;font-size:12.8px;line-height:12.8px;color:#ececec;transform:scaleX(0.8619);">ScrLk</span>
<div class="r" style="left:596px;top:760px;width:66px;height:25px;background:#333333;"></div>
<span id="t153" class="t fit" style="left:601.20px;top:762.66px;font-size:12.8px;line-height:12.8px;color:#ececec;transform:scaleX(0.9260);">Dock</span>
<div class="r" style="left:460px;top:789px;width:65px;height:23px;background:#333333;"></div>
<span id="t154" class="t fit" style="left:465.20px;top:791.46px;font-size:12.8px;line-height:12.8px;color:#ececec;transform:scaleX(0.9522);">Options</span>
<div class="r" style="left:527px;top:789px;width:65px;height:23px;background:#333333;"></div>
<span id="t155" class="t fit" style="left:532.20px;top:791.46px;font-size:12.8px;line-height:12.8px;color:#ececec;transform:scaleX(0.9306);">Help</span>
<div class="r" style="left:596px;top:787px;width:66px;height:25px;background:#333333;"></div>
<span id="t156" class="t fit" style="left:601.20px;top:789.66px;font-size:12.8px;line-height:12.8px;color:#ececec;transform:scaleX(0.8570);">Fade</span>
<svg class="r" style="left:0px;top:0px;overflow:visible" width="200" height="20" viewBox="0 0 200 20"><path d="M12.3 1.2 L17.8 2.7 L16.5 12.4 L12.2 13.8 L11.6 16.8 L6.0 15.3 L7.1 6.3 L11.7 4.4 Z" fill="#ee5f1f"/><ellipse cx="11.7" cy="9.2" rx="0.9" ry="2.2" fill="#363636" transform="rotate(10 11.7 9.2)"/><path d="M31.6 15.6 L31.6 4.7 L35.3 4.7 L36.8 6.3 L43.6 6.3 L43.6 8.6" fill="none" stroke="#fff" stroke-width="1.3"/><path d="M34 8.6 L47 8.6 L44.3 16 L31 16 Z" fill="#fff"/><path d="M52.9 2 L68 2 L68 16.9 L54.2 16.9 L52.9 15.6 Z" fill="#a8a8a8"/><rect x="55.2" y="3.2" width="10.7" height="4.9" rx="0.8" fill="#3a3a3a"/><rect x="56.2" y="4.3" width="8.7" height="0.9" fill="#a8a8a8"/><rect x="56.2" y="6.1" width="8.7" height="0.9" fill="#a8a8a8"/><rect x="56.1" y="11.2" width="8.9" height="4.9" fill="#3a3a3a"/><rect x="57.3" y="12.3" width="1.7" height="3.8" fill="#a8a8a8"/><rect x="78.6" y="2.6" width="8" height="3.6" fill="none" stroke="#fff" stroke-width="1.2"/><rect x="74.7" y="5.6" width="15.5" height="6.4" fill="#fff"/><circle cx="76.6" cy="7.5" r="0.6" fill="#363636"/><rect x="78.6" y="11" width="8" height="5.3" fill="#363636" stroke="#fff" stroke-width="1.2"/><path d="M80 13 H85.2 M80 14.8 H85.2" stroke="#fff" stroke-width="0.9"/><path d="M97.7 7.3 L103.6 3 L103.6 5.6 C107.5 5.6 110.8 8.5 110.7 15.5 C109.5 11.5 107 10 103.6 9.8 L103.6 11.8 Z" fill="#b2b2b2"/><path d="M118.8 7.8 L124.1 7.8 L121.45 10.8 Z" fill="#d8d8d8"/><path d="M145 7.3 L138.2 3 L138.2 5.6 C134.3 5.6 130.2 8.5 130.3 15.5 C131.5 11.5 134.8 10 138.2 9.8 L138.2 11.8 Z" fill="#b2b2b2"/><path d="M151.8 7.8 L157.1 7.8 L154.45 10.8 Z" fill="#d8d8d8"/><rect x="165.5" y="2.5" width="8" height="8" fill="#666" stroke="#fff" stroke-width="1"/><path d="M169.1 5.8 L169.1 16.6 L171.6 14.3 L173.5 18 L175.3 17.1 L173.5 13.5 L176.6 13.2 Z" fill="#363636" stroke="#fff" stroke-width="0.9"/><path d="M180.7 8 L186.2 8 L183.45 11 Z" fill="#fff"/><rect x="193" y="6.8" width="5" height="1.2" fill="#fff"/><path d="M193 9.8 L198 9.8 L195.5 13 Z" fill="#fff"/></svg>
<svg class="r" style="left:0px;top:50px;overflow:visible" width="74" height="70" viewBox="0 50 74 70"><path d="M12.8 70.5 C11 68.6 9.4 66.4 9.7 64.8 C10.2 63.9 11.4 64.2 12.3 65.4 L12.8 66.2 L12.8 59.4 C12.8 57.6 15.4 57.6 15.4 59.4 L15.4 57.9 C15.4 56.1 18.2 56.1 18.2 57.9 L18.2 58.6 C18.2 56.9 21 56.9 21 58.6 L21 60.6 C21 58.9 23.8 58.9 23.8 60.6 L23.8 66.5 C23.8 70 21.8 72 18.3 72 C15.6 72 14 71.7 12.8 70.5 Z" fill="none" stroke="#555" stroke-width="0.8"/><path d="M15.4 59.4 V64.8 M18.2 58.6 V64.5 M21 60.6 V64.8" stroke="#777" stroke-width="0.6"/><rect x="10.4" y="79.7" width="8.2" height="7.8" fill="none" stroke="#e8571f" stroke-width="1.3"/><rect x="9.2" y="78.5" width="2.5" height="2.5" fill="#e8571f"/><rect x="17.3" y="78.5" width="2.5" height="2.5" fill="#e8571f"/><rect x="9.2" y="86.2" width="2.5" height="2.5" fill="#e8571f"/><path d="M18.2 87 L18.2 93.6 L19.9 92.1 L21.2 94.4 L22.4 93.8 L21.2 91.5 L23.6 91.3 Z" fill="#555"/><circle cx="15.7" cy="106.6" r="5.2" fill="none" stroke="#444" stroke-width="1"/><path d="M19.4 110.3 L23.6 114.3" stroke="#444" stroke-width="1.5"/><path d="M15.7 103.9 V109.3 M13 106.6 H18.4" stroke="#e8571f" stroke-width="1.2"/></svg>
<svg class="r" style="left:80px;top:50px;overflow:visible" width="740" height="70" viewBox="80 50 740 70"><path d="M90.9 60.5 H98 M94.45 60.5 V77.5 M90.9 77.5 H98" stroke="#e8571f" stroke-width="1.1" fill="none"/><path d="M102.1 66.5 L102.1 82.2 L105.8 78.8 L108.8 83.6 L111.2 82.1 L108.3 77.3 L113.4 76.7 Z" fill="#606060"/><path d="M131 70.4 H137.9 M134.45 70.4 V82.3 M131 82.3 H137.9" stroke="#555" stroke-width="1" fill="none"/><path d="M178 78 L184.4 84 M184.4 78 L178 84" stroke="#e8571f" stroke-width="1.9"/><path d="M177.3 87.4 H208" stroke="#555" stroke-width="1.2" stroke-dasharray="2.7 1.3"/><g transform="translate(206.2 57.1) rotate(34.8)"><path d="M0 33.3 C-1.2 28 -3.7 20 -3.7 12.5 L-3.3 3.2 Q-3 0 0 0 Q3 0 3.3 3.2 L3.7 12.5 C3.7 20 1.2 28 0 33.3 Z" fill="#5a5a5a"/><rect x="-4" y="7.4" width="8" height="1" fill="#e1e1e1"/><path d="M5.4 3.5 L5.4 14.5" stroke="#5a5a5a" stroke-width="1.2"/><path d="M3.4 3.5 H5.4" stroke="#5a5a5a" stroke-width="1"/></g><path d="M239 86.2 C235 86.2 233.2 82.5 233.3 79.5 C233.4 75 236 72 239.5 71.4 C241 68.5 244 67.2 248.7 67.3 C253 67.3 258 70 260.4 75.2 C263.5 76.2 265 78.5 265 81.5 C265 84.5 263 86.2 260.8 86.2 Z" fill="#fff" stroke="#444" stroke-width="1.1"/><path d="M238.2 76 L241.8 80.5 M241.8 76 L238.2 80.5" stroke="#333" stroke-width="1.3"/><path d="M238.2 83.5 H261.5" stroke="#333" stroke-width="1.3" stroke-dasharray="2.9 1.1"/><path d="M247.2 69.3 L253.4 68.1 L258.9 74 L257.7 78.7 L245.8 81.5 Z" fill="#2b96d3" stroke="#fff" stroke-width="1.2" paint-order="stroke"/><path d="M247.2 69.3 L253.4 68.1 L258.9 74 L257.7 78.7 L245.8 81.5 Z" fill="#2b96d3"/><path d="M253 63.46 L255.8 61.14 L264.5 71.54 L261.7 73.86 Z" fill="#2b96d3"/><path d="M246.3 80.8 L252.3 74.6" stroke="#fff" stroke-width="1.1"/><circle cx="252.6" cy="74.2" r="1.4" fill="#fff"/><path d="M297.4 57.5 L312.2 57.5 L318.5 63.3 L318.5 85.4 L297.4 85.4 Z" fill="#fff" stroke="#5a5a5a" stroke-width="1"/><path d="M312.2 57.5 L318.5 63.3 L312.2 63.3 Z" fill="#5a5a5a"/><circle cx="312.9" cy="74.9" r="7.8" fill="#fff"/><g stroke="#e8571f" stroke-width="1.9" stroke-linecap="butt"><path d="M312.9 68 V81.8 M306 74.9 H319.8 M308 70 L317.8 79.8 M317.8 70 L308 79.8"/></g><rect x="340.8" y="56.8" width="17.4" height="23.2" fill="#fff" stroke="#5a5a5a" stroke-width="1"/><rect x="344.6" y="59.8" width="17.6" height="23.3" fill="#fff" stroke="#5a5a5a" stroke-width="1"/><rect x="348.7" y="62.9" width="17.5" height="23.2" fill="#fff" stroke="#5a5a5a" stroke-width="1"/><rect x="355" y="69" width="13" height="13" fill="#fff"/><path d="M362.5 69 V82 M356 75.5 H369" stroke="#e8571f" stroke-width="2.6"/><path d="M401.7 57.7 L416.5 57.7 L422.2 62.9 L422.2 85.1 L401.7 85.1 Z" fill="#fff" stroke="#5a5a5a" stroke-width="1"/><path d="M416.5 57.7 L422.2 62.9 L416.5 62.9 Z" fill="#5a5a5a"/><rect x="400" y="72" width="3" height="6" fill="#e1e1e1"/><path d="M398 74.9 H405" stroke="#5a5a5a" stroke-width="1.6"/><path d="M404 71.3 L410 74.9 L404 78.5 Z" fill="#5a5a5a"/><path d="M412.2 68.3 Q420 67.6 427.8 68 L427.8 81.7 Q420 81.2 412.2 81.6 Z" fill="#2b579a"/><path d="M414.8 70.8 L416.6 79.2 L420 72.5 L423.4 79.2 L425.2 70.8" fill="none" stroke="#fff" stroke-width="1.3"/><path d="M443.6 57.7 L458.4 57.7 L464.4 62.9 L464.4 85.1 L443.6 85.1 Z" fill="#fff" stroke="#5a5a5a" stroke-width="1"/><path d="M458.4 57.7 L464.4 62.9 L458.4 62.9 Z" fill="#5a5a5a"/><rect x="442" y="72" width="3" height="6" fill="#e1e1e1"/><path d="M440 74.9 H447" stroke="#5a5a5a" stroke-width="1.6"/><path d="M446 71.3 L452 74.9 L446 78.5 Z" fill="#5a5a5a"/><path d="M454 68.3 Q462 67.6 469.9 68 L469.9 81.7 Q462 81.2 454 81.6 Z" fill="#217346"/><path d="M458.5 70.8 L465.3 79.2 M465.3 70.8 L458.5 79.2" fill="none" stroke="#fff" stroke-width="1.4"/><path d="M498.9 61 L526.8 61 L523.2 81.9 L498.9 81.9 Z" fill="#fdd115"/><rect x="556.7" y="59.5" width="17.5" height="21.8" fill="#fff" stroke="#5a5a5a" stroke-width="1"/><rect x="558.5" y="61.3" width="17.5" height="22" fill="#fff" stroke="#5a5a5a" stroke-width="1"/><path d="M565.5 57.6 L578.6 57.6 L582.4 61.6 L582.4 79.4 L565.5 79.4 Z" fill="#fff" stroke="#e8571f" stroke-width="1"/><path d="M578.6 57.6 L582.4 61.6 L578.6 61.6 Z" fill="#e8571f" stroke="#e8571f" stroke-width="1"/><path d="M560.6 63.5 L572.7 63.5 L577.2 68 L577.2 85.3 L560.6 85.3 Z" fill="#fff" stroke="#5a5a5a" stroke-width="1"/><path d="M572.7 63.5 L577.2 68 L572.7 68 Z" fill="#5a5a5a"/><rect x="581" y="70" width="3" height="7" fill="#e1e1e1"/><path d="M582 73.4 H587" stroke="#e8571f" stroke-width="1.4"/><path d="M583.5 70.2 L579 73.4 L583.5 76.6 Z" fill="#e8571f"/><path d="M597.5 56.6 L606.5 56.6 L610.2 60.3 L610.2 71.1 L597.5 71.1 Z" fill="#fff" stroke="#5a5a5a" stroke-width="1"/><path d="M606.5 56.6 L610.2 60.3 L606.5 60.3 Z" fill="#5a5a5a"/><path d="M601 68.5 V65.5 Q601 63.3 603.5 63.3 H606" fill="none" stroke="#e8571f" stroke-width="1.8"/><path d="M605.5 60.6 L609.2 63.3 L605.5 66 Z" fill="#e8571f"/><path d="M597.1 79.9 H610.9 V83.8 H609 V82 H599.1 V83.8 H597.1 Z" fill="#e8571f"/><rect x="602" y="78.9" width="4" height="1.3" fill="#e8571f"/><path d="M599.1 84 H609 V92.9 H599.1 Z M600.9 84.8 V91.3 H607.2 V84.8 Z" fill="#e8571f" fill-rule="evenodd"/><rect x="601.9" y="84.6" width="1.2" height="6.2" rx="0.5" fill="#e8571f"/><rect x="604.9" y="84.6" width="1.2" height="6.2" rx="0.5" fill="#e8571f"/><rect x="600.9" y="84.8" width="6.3" height="6.5" fill="#fff" opacity="0"/><path d="M596.5 101.5 L603 101.5 L606.1 104.6 L606.1 115.2 L596.5 115.2 Z" fill="#fff" stroke="#5a5a5a" stroke-width="1"/><path d="M603 101.5 L606.1 104.6 L603 104.6 Z" fill="#5a5a5a"/><path d="M599.8 106.8 H605.2 M599.8 108.8 H605.2 M599.8 110.8 H605.2 M599.8 112.8 H605.2" stroke="#e8571f" stroke-width="1"/><path d="M605 110.5 H609" stroke="#e8571f" stroke-width="1.3"/><path d="M608.5 108 L611.5 110.5 L608.5 113 Z" fill="#e8571f"/><path d="M689.6 58.7 L702 58.7 L708.4 64.7 L708.4 85.3 L689.6 85.3 Z" fill="#fff" stroke="#5a5a5a" stroke-width="1"/><path d="M702 58.7 L702 64.7 L708.4 64.7" fill="none" stroke="#5a5a5a" stroke-width="1"/><circle cx="697.9" cy="73.4" r="4.2" fill="none" stroke="#e8571f" stroke-width="1.4"/><path d="M700.8 76.5 L704.2 80.3" stroke="#e8571f" stroke-width="1.5"/><path d="M763.5 68 V76.6 M759.2 72.3 H767.8" stroke="#e8571f" stroke-width="2.8"/><path d="M769 58.4 Q768.2 63.2 771.4 65 L771.4 79.5 L775.2 79.5 L775.2 65 Q778.4 63.2 777.6 58.4 L775.9 58.4 L775.9 61.8 L770.7 61.8 L770.7 58.4 Z" fill="#5a5a5a"/><circle cx="773.3" cy="82.3" r="3" fill="none" stroke="#5a5a5a" stroke-width="2.6"/><rect x="781.2" y="58.5" width="1.6" height="13.5" fill="#5a5a5a"/><path d="M778.9 72.5 Q778.9 71.6 780 71.6 H784.2 Q785.3 71.6 785.3 72.5 V84.6 Q785.3 85.8 784 85.8 H780.2 Q778.9 85.8 778.9 84.6 Z" fill="#5a5a5a"/><path d="M781 74.5 V80.5 M783.2 74.5 V80.5" stroke="#e1e1e1" stroke-width="0.7"/></svg>
<svg class="r" style="left:130px;top:55px;overflow:visible" width="30" height="35" viewBox="130 55 30 35"><path d="M137 61.2 L157 61.2 L156.6 66.8 L155.8 66.8 Q155.2 64 152.5 63.8 L149.2 63.8 L149.2 80.4 Q149.4 81.7 152.4 81.8 L152.4 82.8 L141.6 82.8 L141.6 81.8 Q144.9 81.7 145.2 80.4 L145.2 63.8 L141.6 63.8 Q138.8 64 138.2 66.8 L137.4 66.8 Z" fill="#5c5c5c"/></svg>
<span id="t157" class="t fit" style="left:504.80px;top:61.99px;font-size:19.5px;line-height:19.5px;color:#222;font-family:'Liberation Serif',serif;">A</span>
<svg class="r" style="left:0px;top:150px;overflow:visible" width="50" height="90" viewBox="0 150 50 90"><rect x="3.6" y="153.5" width="12" height="14.7" fill="#fff" stroke="#555" stroke-width="1"/><path d="M5.8 157.4 H13 M5.8 160.4 H13 M5.8 163.4 H13" stroke="#999" stroke-width="0.9"/><path d="M3.6 175.5 L12.4 175.5 L15.6 178.7 L15.6 190.2 L3.6 190.2 Z" fill="#fff" stroke="#555" stroke-width="1"/><path d="M12.4 175.5 L15.6 178.7 L12.4 178.7 Z" fill="#555"/><path d="M5 179.4 H8.4 M5 182.4 H8.4 M5 186.4 H8.4" stroke="#e8571f" stroke-width="1"/><path d="M9 179.4 H12 M9 182.4 H11" stroke="#999" stroke-width="0.8"/><circle cx="13.2" cy="186.2" r="2.6" fill="#fff" stroke="#555" stroke-width="1"/><circle cx="13.2" cy="186.2" r="1" fill="#e8571f"/><path d="M15 188 L17.6 190.6" stroke="#555" stroke-width="1"/><path d="M11.5 198.5 H15.6 V212.5 H4.5 V198.5 H5.5" fill="none" stroke="#555" stroke-width="1"/><path d="M6 197 H11 V210 L8.5 207.5 L6 210 Z" fill="#e8571f"/><path d="M15.5 225 V220.5 H4.5 V233.5 H10" fill="none" stroke="#555" stroke-width="1"/><rect x="10.8" y="228.3" width="7.2" height="6" fill="#e8571f"/><path d="M12.3 228.5 V227 Q14.4 224 16.5 227 V228.5" fill="none" stroke="#e8571f" stroke-width="1.2"/><circle cx="14.4" cy="231.2" r="0.7" fill="#fff"/><path d="M30.7 156.8 L38.8 156.8 L41.8 159.8 L41.8 171.2 L30.7 171.2 Z" fill="#fff" stroke="#777" stroke-width="1"/><path d="M38.8 156.8 L41.8 159.8 L38.8 159.8 Z" fill="#777"/><path d="M36.2 159.5 L39.6 160.4 L38.9 166.3 L36.3 167.1 L36 169 L32.5 168 L33.2 162.6 L36 161.5 Z" fill="#e8571f"/></svg>
<div class="r" style="left:901px;top:798px;width:24px;height:20px;background:#b0b0b0;"></div>
<svg class="r" style="left:660px;top:796px;overflow:visible" width="565" height="22" viewBox="660 796 565 22"><circle cx="675" cy="808" r="8" fill="#5a5a5a"/><path d="M678.2 803.8 L671.4 808 L678.2 812.2 Z" fill="#f0f0f0"/><circle cx="699" cy="808" r="8" fill="#b4b4b4"/><path d="M696.2 803.8 L703 808 L696.2 812.2 Z" fill="#f0f0f0"/><rect x="883.6" y="801.6" width="9.8" height="11.8" fill="#fafafa" stroke="#555" stroke-width="1.2"/><rect x="905.8" y="801.6" width="11.4" height="5.6" fill="#b0b0b0" stroke="#555" stroke-width="1.2"/><rect x="905.8" y="808.6" width="11.4" height="5.2" fill="#b0b0b0" stroke="#555" stroke-width="1.2"/><rect x="929.6" y="801.6" width="4.8" height="11.8" fill="#fafafa" stroke="#555" stroke-width="1.2"/><rect x="936.8" y="801.6" width="4.8" height="11.8" fill="#fafafa" stroke="#555" stroke-width="1.2"/><rect x="953.6" y="801.6" width="11.8" height="11.8" fill="#fafafa" stroke="#555" stroke-width="1.2"/><path d="M959.5 801.6 V813.4 M953.6 807.5 H965.4" stroke="#555" stroke-width="1.2"/><rect x="977.6" y="801.6" width="12" height="9.8" fill="none" stroke="#555" stroke-width="1.2"/><rect x="980" y="803.8" width="7.2" height="5.4" fill="none" stroke="#555" stroke-width="1"/><path d="M980.5 811.5 V813.2 M986.7 811.5 V813.2 M978 813.6 H989.2" stroke="#555" stroke-width="1"/><rect x="1001.8" y="801.6" width="12" height="9.8" fill="none" stroke="#555" stroke-width="1.2"/><rect x="1004.2" y="803.8" width="7.2" height="5.4" fill="none" stroke="#555" stroke-width="1"/><path d="M1007.8 803.8 V809.2 M1004.7 811.5 V813.2 M1010.9 811.5 V813.2 M1002.2 813.6 H1013.4" stroke="#555" stroke-width="1"/><path d="M1026.5 808.2 H1034.6" stroke="#555" stroke-width="1"/><path d="M1044 808.2 H1136" stroke="#666" stroke-width="1.2"/><rect x="1089.4" y="802" width="3.6" height="10.6" fill="#555"/><path d="M1145 808.2 H1153.2 M1149.1 804.1 V812.3" stroke="#555" stroke-width="1"/></svg>
<span id="t158" class="t fit" style="left:1169.50px;top:804.02px;font-size:11.2px;line-height:11.2px;color:#333;transform:scaleX(0.9258);">100%</span>
</body></html>
